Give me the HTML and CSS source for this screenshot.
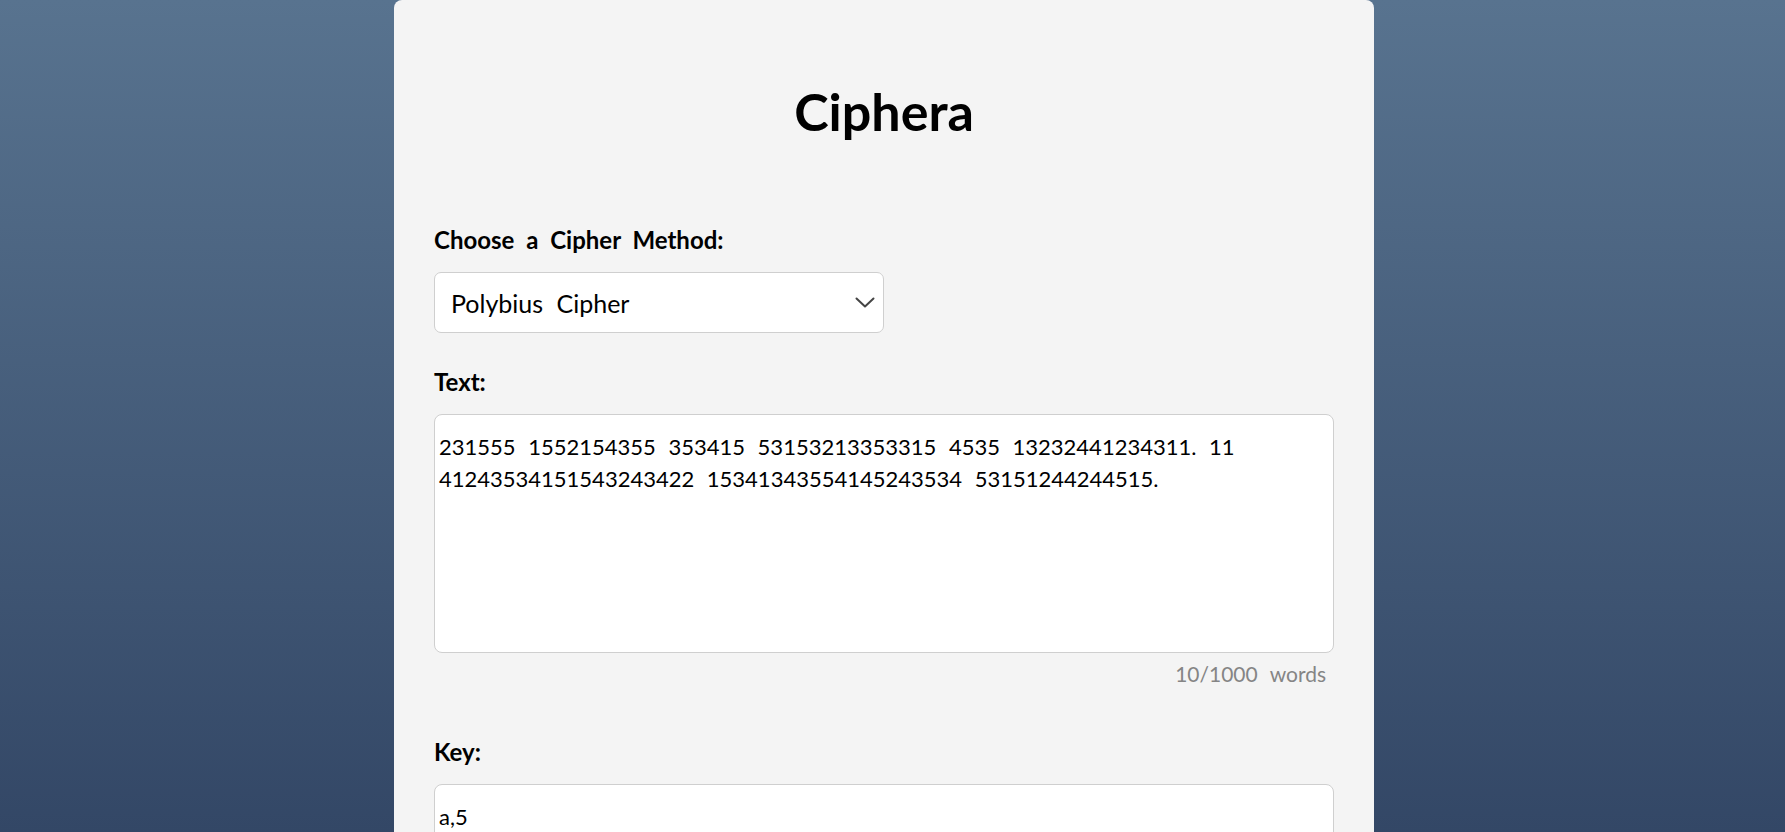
FILE: index.html
```html
<!DOCTYPE html>
<html lang="en">
<head>
<meta charset="utf-8">
<title>Ciphera</title>
<link rel="stylesheet" href="styles.css">
</head>
<body>
<div class="page">
  <main class="card">
    <h1 class="title">Ciphera</h1>

    <div class="field">
      <label class="label" for="method">Choose a Cipher Method:</label>
      <div class="select-wrap">
        <select class="select" id="method">
          <option>Polybius Cipher</option>
          <option>Caesar Cipher</option>
          <option>Vigenère Cipher</option>
        </select>
        <svg class="chevron" width="20" height="11" viewBox="0 0 20 11" aria-hidden="true">
          <path d="M1.5 1.5 L10 9.5 L18.5 1.5" fill="none" stroke="#444" stroke-width="2" stroke-linecap="round" stroke-linejoin="round"/>
        </svg>
      </div>
    </div>

    <div class="field field-text">
      <label class="label" for="text">Text:</label>
      <textarea class="box textarea" id="text">231555 1552154355 353415 53153213353315 4535 13232441234311. 11
41243534151543243422 15341343554145243534 53151244244515.</textarea>
      <div class="counter">10/1000 words</div>
    </div>

    <div class="field">
      <label class="label" for="key">Key:</label>
      <textarea class="box key" id="key">a,5</textarea>
    </div>

    <div class="actions">
      <button class="btn">Encrypt</button>
      <button class="btn">Decrypt</button>
    </div>
  </main>
</div>
</body>
</html>
```

FILE: styles.css
```css
html {
  background: linear-gradient(to bottom, #58738f 0%, #334766 832px, #2f4262 100%);
  min-height: 100%;
}

body {
  margin: 0;
  font-family: Lato, "Noto Sans", sans-serif;
  color: #000;
}

/* the right padding stands in for the scrollbar gutter of the original layout */
.page {
  display: flex;
  justify-content: center;
  padding-right: 17px;
}

.card {
  width: 980px;
  box-sizing: border-box;
  background: #f4f4f4;
  border-radius: 8px;
  padding: 80px 40px 60px;
}

.title {
  margin: 0 0 82px;
  text-align: center;
  font-size: 52px;
  line-height: 62px;
  font-weight: 700;
  color: #000;
}

.field {
  display: flex;
  flex-direction: column;
  margin-bottom: 33px;
}

.field-text {
  margin-bottom: 48px;
}

.label {
  font-size: 24px;
  line-height: 32px;
  font-weight: 700;
  word-spacing: 6px;
  margin-bottom: 16px;
  color: #000;
}

.select-wrap {
  position: relative;
  width: 450px;
}

.select {
  appearance: none;
  -webkit-appearance: none;
  width: 100%;
  height: 61px;
  box-sizing: border-box;
  border: 1px solid #cfcfcf;
  border-radius: 7px;
  background: #fff;
  padding: 0 40px 0 16px;
  font-family: inherit;
  font-size: 25px;
  word-spacing: 7px;
  color: #000;
}

.chevron {
  position: absolute;
  right: 9px;
  top: 25px;
  pointer-events: none;
}

.box {
  display: block;
  width: 100%;
  box-sizing: border-box;
  border: 1px solid #cfcfcf;
  border-radius: 8px;
  background: #fff;
  padding: 16px 4px;
  font-family: inherit;
  font-size: 22px;
  line-height: 32px;
  word-spacing: 7px;
  color: #000;
  resize: none;
  outline: none;
}

.textarea {
  height: 239px;
}

.key {
  height: 66px;
}

.counter {
  margin-top: 7px;
  padding-right: 8px;
  text-align: right;
  font-size: 21px;
  line-height: 28px;
  word-spacing: 7px;
  color: #858585;
}

.actions {
  display: flex;
  gap: 16px;
}

.btn {
  font-family: inherit;
  font-size: 22px;
  padding: 12px 28px;
  border: none;
  border-radius: 8px;
  background: #3a4f6e;
  color: #fff;
}
```
